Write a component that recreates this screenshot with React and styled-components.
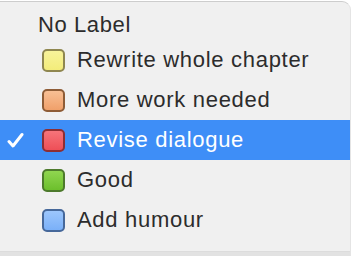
import React from "react";
import styled, { createGlobalStyle } from "styled-components";

const GlobalStyle = createGlobalStyle`
  html, body {
    margin: 0;
    padding: 0;
    background: #ffffff;
  }
  body {
    width: 352px;
    height: 256px;
    overflow: hidden;
    font-family: "Liberation Sans", Arial, sans-serif;
  }
`;

const Page = styled.div`
  width: 352px;
  height: 256px;
  padding-top: 1px;
  box-sizing: border-box;
  display: flex;
  flex-direction: column;
`;

const Menu = styled.div`
  flex: 1;
  display: flex;
  flex-direction: column;
  background: #f0f0f0;
  border-top: 1px solid #cdcdcd;
  border-right: 1px solid #e4e4e4;
  border-top-right-radius: 9px;
  margin-right: 1px;
`;

const Header = styled.div`
  height: 38px;
  padding: 8px 0 0 38px;
  box-sizing: border-box;
  font-size: 22px;
  letter-spacing: 0.6px;
  line-height: 30px;
  color: #2c2c2c;
`;

const Item = styled.div`
  height: 40px;
  display: grid;
  grid-template-columns: 42px 23px 1fr;
  align-items: center;
  background: ${(p) => (p.$active ? "#3e8ef7" : "transparent")};
  color: ${(p) => (p.$active ? "#ffffff" : "#2c2c2c")};
  font-size: 22px;
  letter-spacing: 0.7px;
`;

const Check = styled.span`
  display: flex;
  align-items: center;
  padding-left: 7px;
`;

const Swatch = styled.span`
  width: 23px;
  height: 23px;
  box-sizing: border-box;
  border-radius: 5px;
  border: 2px solid ${(p) => p.$border};
  background: linear-gradient(${(p) => p.$top}, ${(p) => p.$bottom});
`;

const Label = styled.span`
  padding-left: 12px;
  white-space: nowrap;
`;

const Spacer = styled.div`
  flex: 1;
`;

const Band = styled.div`
  height: 4px;
  background: #e2e2e2;
  border-top: 1px solid #dcdcdc;
`;

const labels = [
  { name: "Rewrite whole chapter", top: "#f8f39a", bottom: "#f3ec7a", border: "#8f8750" },
  { name: "More work needed", top: "#f8bf94", bottom: "#f0a06a", border: "#8e5c36" },
  { name: "Revise dialogue", top: "#f6747a", bottom: "#ee4f57", border: "#8e2e33", active: true },
  { name: "Good", top: "#90d650", bottom: "#6cbf2c", border: "#4d7a2c" },
  { name: "Add humour", top: "#9cc6fc", bottom: "#7ab0f8", border: "#46689a" },
];

function CheckMark() {
  return (
    <svg width="17" height="17" viewBox="0 0 17 17">
      <path
        d="M2 9.5 L6 14 L15 2.5"
        fill="none"
        stroke="#ffffff"
        strokeWidth="3"
        strokeLinecap="round"
        strokeLinejoin="round"
      />
    </svg>
  );
}

export default function App() {
  return (
    <>
      <GlobalStyle />
      <Page>
        <Menu>
          <Header>No Label</Header>
          {labels.map((l) => (
            <Item key={l.name} $active={l.active}>
              <Check>{l.active && <CheckMark />}</Check>
              <Swatch $top={l.top} $bottom={l.bottom} $border={l.border} />
              <Label>{l.name}</Label>
            </Item>
          ))}
          <Spacer />
          <Band />
        </Menu>
      </Page>
    </>
  );
}
